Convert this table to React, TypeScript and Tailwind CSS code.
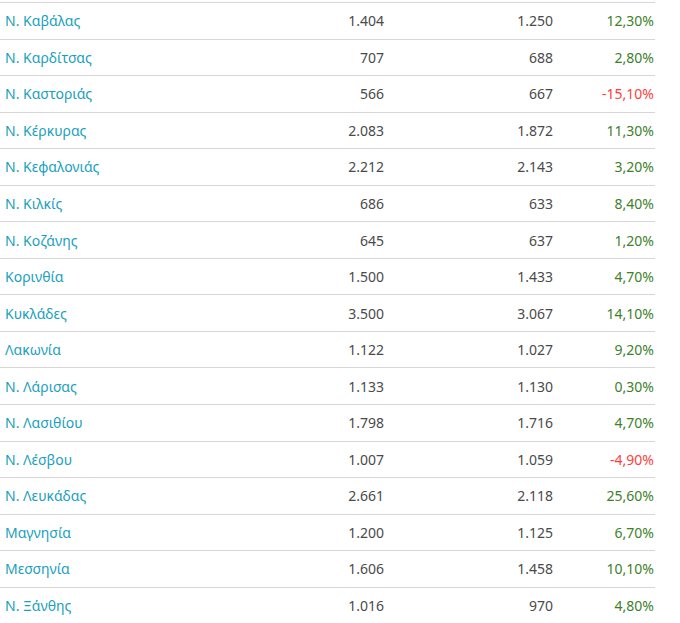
import React from "react";

type Row = [string, string, string, string];

const rows: Row[] = [
  ["Ν. Καβάλας", "1.404", "1.250", "12,30%"],
  ["Ν. Καρδίτσας", "707", "688", "2,80%"],
  ["Ν. Καστοριάς", "566", "667", "-15,10%"],
  ["Ν. Κέρκυρας", "2.083", "1.872", "11,30%"],
  ["Ν. Κεφαλονιάς", "2.212", "2.143", "3,20%"],
  ["Ν. Κιλκίς", "686", "633", "8,40%"],
  ["Ν. Κοζάνης", "645", "637", "1,20%"],
  ["Κορινθία", "1.500", "1.433", "4,70%"],
  ["Κυκλάδες", "3.500", "3.067", "14,10%"],
  ["Λακωνία", "1.122", "1.027", "9,20%"],
  ["Ν. Λάρισας", "1.133", "1.130", "0,30%"],
  ["Ν. Λασιθίου", "1.798", "1.716", "4,70%"],
  ["Ν. Λέσβου", "1.007", "1.059", "-4,90%"],
  ["Ν. Λευκάδας", "2.661", "2.118", "25,60%"],
  ["Μαγνησία", "1.200", "1.125", "6,70%"],
  ["Μεσσηνία", "1.606", "1.458", "10,10%"],
  ["Ν. Ξάνθης", "1.016", "970", "4,80%"],
];

export default function App() {
  return (
    <div
      className="w-[680px] h-[623px] overflow-hidden bg-white pt-[2px]"
      style={{ fontFamily: '"Noto Sans", "Open Sans", sans-serif' }}
    >
      <div className="w-[655px]">
        {rows.map((r, i) => {
          const neg = r[3].startsWith("-");
          return (
            <div
              key={i}
              className="grid grid-cols-[230px_154px_169px_101px] items-center h-[36.56px] border-t border-[#d6d6d6] text-[14px]"
            >
              <div className="pl-[5px] text-[#1a9fbd]">{r[0]}</div>
              <div className="text-right text-[#4a4a4a]">{r[1]}</div>
              <div className="text-right text-[#4a4a4a]">{r[2]}</div>
              <div className={neg ? "text-right text-[#ff3d3d]" : "text-right text-[#3d7f2c]"}>
                {r[3]}
              </div>
            </div>
          );
        })}
      </div>
    </div>
  );
}
